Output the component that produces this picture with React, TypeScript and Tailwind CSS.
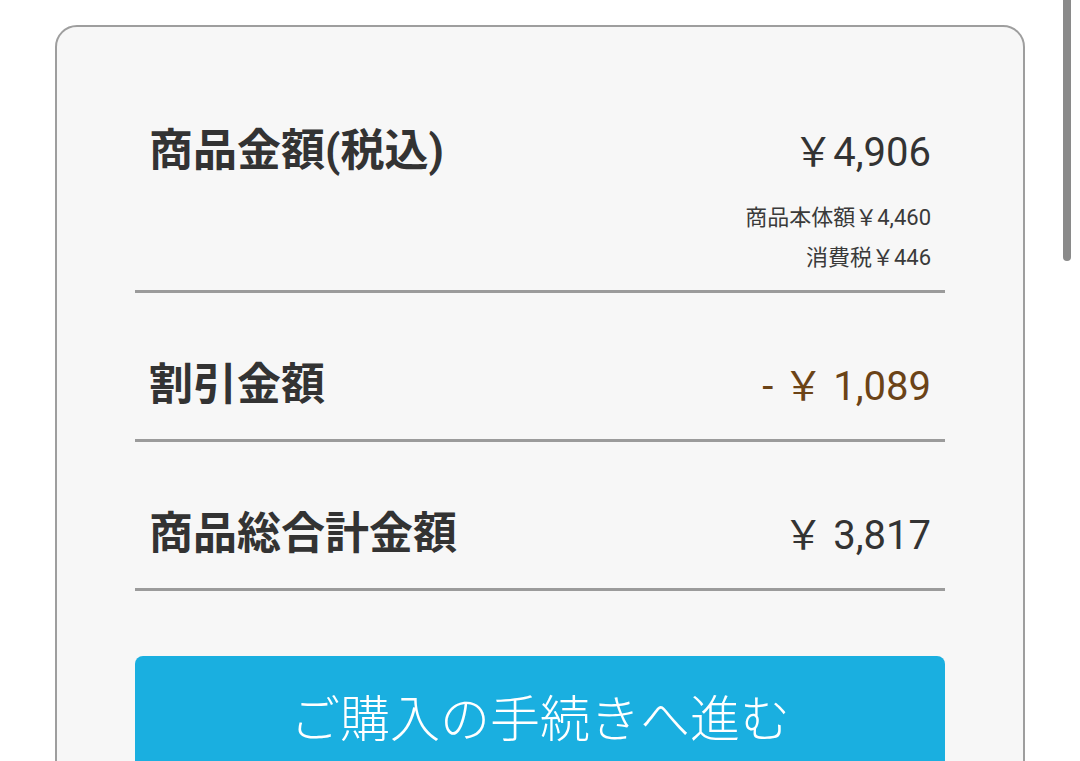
const ROWS = [
  { label: "割引金額", value: "- ￥ 1,089", tone: "text-[#6b4317]" },
  { label: "商品総合計金額", value: "￥ 3,817", tone: "text-[#333333]" },
];

export default function App() {
  return (
    <div
      className="relative h-[761px] w-[1080px] overflow-hidden bg-white text-[#333333]"
      style={{ fontFamily: "Roboto, 'Noto Sans CJK JP', sans-serif" }}
    >
      {/* Scroll indicator */}
      <div className="absolute right-[9px] top-0 h-[261px] w-[8px] rounded-b-full bg-[#8a8a8a]" />

      <div className="ml-[55px] mt-[25px] h-[800px] w-[970px] rounded-t-[22px] border-2 border-[#9e9e9e] bg-[#f7f7f7] px-[78px]">
        {/* 商品金額 */}
        <div className="border-b-[3px] border-[#9b9b9b] px-[14px] pb-[12px] pt-[93px]">
          <div className="flex items-baseline justify-between leading-[63px]">
            <span className="text-[44px] font-bold">商品金額(税込)</span>
            <span className="text-[40px]">￥4,906</span>
          </div>
          <div className="mt-[14px] text-right text-[22px] leading-[40px] text-[#3a3a3a]">
            <div>商品本体額￥4,460</div>
            <div>消費税￥446</div>
          </div>
        </div>

        {ROWS.map((row) => (
          <div
            key={row.label}
            className="flex items-baseline justify-between border-b-[3px] border-[#9b9b9b] px-[14px] pb-[21px] pt-[61px] leading-[63px]"
          >
            <span className="text-[44px] font-bold">{row.label}</span>
            <span className={`text-[40px] ${row.tone}`}>{row.value}</span>
          </div>
        ))}

        <button className="mt-[65px] flex h-[128px] w-full items-center justify-center rounded-[8px] bg-[#1aafe0] text-[50px] font-light text-white">
          ご購入の手続きへ進む
        </button>
      </div>
    </div>
  );
}
